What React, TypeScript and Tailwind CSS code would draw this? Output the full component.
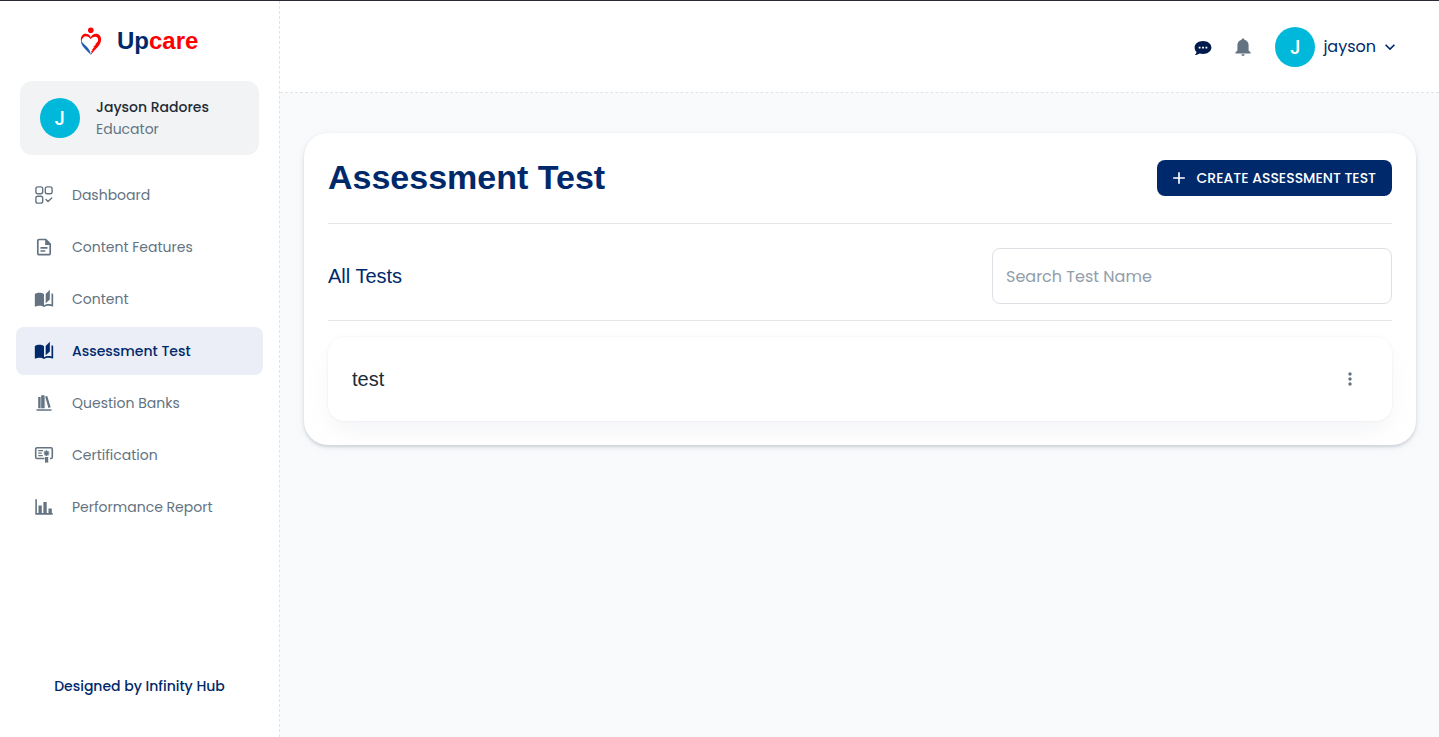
import type { ReactNode } from "react";
import { MdAutoStories, MdMoreVert, MdAdd, MdExpandMore } from "react-icons/md";

function DashboardIcon() {
  return (
    <svg viewBox="0 0 20 20" className="size-5" fill="none" stroke="currentColor" strokeWidth="1.4" strokeLinecap="round" strokeLinejoin="round">
      <rect x="1.9" y="1.9" width="6.8" height="6.8" rx="1.9" />
      <rect x="11.3" y="1.9" width="6.8" height="6.8" rx="1.9" />
      <rect x="1.9" y="11.3" width="6.8" height="6.8" rx="1.9" />
      <path d="M12 14.4l2 2 3.8-3.5" />
    </svg>
  );
}

function DocumentIcon() {
  return (
    <svg viewBox="0 0 20 20" className="size-5" fill="none" stroke="currentColor" strokeWidth="1.7" strokeLinejoin="round">
      <path d="M11.8 2.5H5a1.2 1.2 0 0 0-1.2 1.2v12.8A1.2 1.2 0 0 0 5 17.7h10a1.2 1.2 0 0 0 1.2-1.2V7z" />
      <path d="M11.2 2v5.9h5.6z" fill="currentColor" stroke="none" />
      <path d="M6.500 10.800h7M6.500 14h4.800" />
    </svg>
  );
}

function BooksIcon() {
  return (
    <svg viewBox="0 0 20 20" className="size-5" fill="currentColor">
      <path d="M4.200 4h2.300v11.300H4.200zM7.200 2.300h3.300v13H7.200zM11.200 3.500l2-.6 3.500 11.400-2.300.8zM2.500 16.200h15v1.600h-15z" />
      <path d="M6.500 4h.7v11.300h-.7zM10.500 3.500h.7v11.800h-.7z" opacity=".45" />
    </svg>
  );
}

function CertificateIcon() {
  return (
    <svg viewBox="0 0 20 20" className="size-5" fill="none" stroke="currentColor" strokeWidth="1.6">
      <path d="M10.500 13.500H3a1.300 1.300 0 0 1-1.300-1.300V4A1.300 1.300 0 0 1 3 2.700h14A1.300 1.300 0 0 1 18.300 4v8.200a1.300 1.300 0 0 1-1.300 1.300h-1" strokeLinejoin="round" />
      <path d="M4.200 5.700h5M4.200 8.200h3.600M4.200 10.700h4.500" strokeWidth="1.300" />
      <path d="M12.500 5.300v5.800M9.700 8.200h5.600M10.500 6.200l4 4M10.500 10.200l4-4" strokeWidth="1.300" />
      <path d="M11 12h3.200v6l-1.600-.8-1.600.8z" fill="currentColor" stroke="none" />
    </svg>
  );
}

function ChartIcon() {
  return (
    <svg viewBox="0 0 20 20" className="size-5" fill="currentColor">
      <path d="M1.300 2.300h1.600v13.800h15.800v1.700H1.300zM4.500 8.500h3.300v7.800H4.500zM9.400 5h3.300v11.300H9.400zM14.500 11.500h3.300v4.800h-3.300z" />
    </svg>
  );
}

function LogoIcon() {
  return (
    <svg viewBox="0 0 22 28" className="h-7 w-[22px]">
      <circle cx="10.800" cy="3.300" r="2.800" fill="#f00" />
      <path d="M10.800 10.200C8 4.800.9 6.200.9 12.400c0 .9.100 1.700.4 2.500C2.200 8.600 7.200 7.300 10.800 12.200z" fill="#f00" />
      <path d="M10.800 10.200c2.900-5.400 10.300-4 10.300 2.400 0 6.300-6.600 9.900-10.300 15.400.1-1.300.5-2.300 1-3.100l-.9.100 2.200-2.400-1.500.2 3-2.700-1.700.2 3.400-3.100-1.500.2c3.300-2.300 3.700-3.900 3.100-5.800-.9-2.400-4.500-2.500-7.400.6z" fill="#f00" />
      <path d="M.9 12.400c1.100 5.500 9.400 6.600 9.900 15.600C7.400 23.200.5 20 .9 12.400z" fill="#2460b0" />
    </svg>
  );
}

function ChatIcon() {
  return (
    <svg viewBox="0 0 20 20" className="size-5">
      <path d="M10 4c4.700 0 8.400 2.900 8.400 6.500S14.700 17 10 17c-1.200 0-2.400-.2-3.400-.5-1.100.9-2.900 1.500-4.700 1.500 1-.9 1.500-2 1.600-3-1.200-1.100-1.900-2.700-1.900-4.500C1.600 6.900 5.300 4 10 4z" fill="#001a4d" />
      <path d="M5.700 9.800h1.800v1.700H5.700zM9.100 9.800h1.800v1.700H9.100zM12.500 9.800h1.800v1.700h-1.800z" fill="#fff" />
    </svg>
  );
}

function BellIcon() {
  return (
    <svg viewBox="0 0 20 20" className="size-5" fill="#637381">
      <path d="M10 1.500c.8 0 1.300.5 1.400 1.200 2.600.6 4.200 2.700 4.200 5.500v5.300l2 1.900v1H2.400v-1l2-1.900V8.200c0-2.800 1.600-4.900 4.200-5.500.1-.7.600-1.200 1.400-1.200zM8.300 17.200h3.400a1.700 1.700 0 0 1-3.400 0z" />
    </svg>
  );
}

const navItems: { label: string; icon: ReactNode; active?: boolean }[] = [
  { label: "Dashboard", icon: <DashboardIcon /> },
  { label: "Content Features", icon: <DocumentIcon /> },
  { label: "Content", icon: <MdAutoStories className="size-5" /> },
  { label: "Assessment Test", icon: <MdAutoStories className="size-5" />, active: true },
  { label: "Question Banks", icon: <BooksIcon /> },
  { label: "Certification", icon: <CertificateIcon /> },
  { label: "Performance Report", icon: <ChartIcon /> },
];

function Avatar() {
  return (
    <span className="flex size-10 shrink-0 items-center justify-center rounded-full bg-[#00b8d9] text-xl font-medium text-white">
      J
    </span>
  );
}

function Sidebar() {
  return (
    <aside className="flex w-[280px] shrink-0 flex-col border-r border-dashed border-[#e0e4e8] bg-white">
      <a href="#" className="flex h-20 items-center gap-[15px] pl-20 font-['Liberation_Sans',sans-serif] text-2xl font-bold text-[#00296b]">
        <LogoIcon />
        <span>
          Up<span className="text-[#f00]">care</span>
        </span>
      </a>
      <a href="#" className="mx-5 flex items-center gap-4 rounded-xl bg-[#f1f3f5] px-5 py-[15px] text-sm leading-[22px]">
        <Avatar />
        <span className="flex flex-col">
          <span className="font-medium text-[#212b36]">Jayson Radores</span>
          <span className="text-[#637381]">Educator</span>
        </span>
      </a>
      <nav className="mt-4 flex flex-col gap-1 px-4">
        {navItems.map((item) => (
          <a
            key={item.label}
            href="#"
            aria-current={item.active ? "page" : undefined}
            className={
              "flex h-12 items-center gap-[18px] rounded-lg pl-[18px] text-sm " +
              (item.active ? "bg-[#ebeef6] font-medium text-[#00296b]" : "text-[#637381]")
            }
          >
            {item.icon}
            {item.label}
          </a>
        ))}
      </nav>
      <p className="mt-auto pb-10 text-center text-sm leading-[22px] font-medium text-[#00296b]">
        Designed by Infinity Hub
      </p>
    </aside>
  );
}

function Header() {
  return (
    <header className="flex h-[92px] items-center justify-end border-b border-dashed border-[#e0e4e8] bg-white pr-[39px]">
      <button aria-label="Messages" className="mr-5">
        <ChatIcon />
      </button>
      <button aria-label="Notifications" className="mr-[22px]">
        <BellIcon />
      </button>
      <button className="flex items-center gap-2 text-base text-[#00296b]">
        <Avatar />
        jayson
        <MdExpandMore className="-ml-1 size-5" />
      </button>
    </header>
  );
}

export default function App() {
  return (
    <div className="flex min-h-screen border-t border-[#2b2a33] bg-[#f9fafc] font-[Poppins,Inter,sans-serif]">
      <Sidebar />
      <div className="min-w-0 flex-1">
        <Header />
        <main className="pt-10 pr-[23px] pb-10 pl-6">
          <section className="rounded-3xl bg-white p-6 shadow-[0_2px_3px_rgba(99,115,129,0.24),0_2px_8px_rgba(145,158,171,0.14)]">
            <div className="flex items-center justify-between border-b border-[#e3e6e9] pb-6">
              <h1 className="pb-[2px] font-['Liberation_Sans',sans-serif] text-[34px] leading-10 font-bold text-[#00296b]">
                Assessment Test
              </h1>
              <button className="flex h-9 items-center gap-2 rounded-lg bg-[#00296b] pr-4 pl-3 text-sm font-medium text-white">
                <MdAdd className="size-5" />
                CREATE ASSESSMENT TEST
              </button>
            </div>
            <div className="flex items-center justify-between border-b border-[#e3e6e9] pt-6 pb-4">
              <h2 className="font-['Liberation_Sans',sans-serif] text-xl text-[#00296b]">All Tests</h2>
              <input
                type="text"
                aria-label="Search Test Name"
                placeholder="Search Test Name"
                className="h-14 w-[400px] rounded-lg border border-[#dce0e4] bg-white px-[13px] text-base text-[#212b36] placeholder:text-[#919eab]"
              />
            </div>
            <article className="mt-4 flex h-[84px] items-center justify-between rounded-2xl bg-white px-6 shadow-[0_0_2px_rgba(145,158,171,0.2),0_12px_24px_-4px_rgba(145,158,171,0.12)]">
              <h3 className="font-['Liberation_Sans',sans-serif] text-xl text-[#212b36]">test</h3>
              <button aria-label="More options" className="px-2 text-[#637381]">
                <MdMoreVert className="size-5" />
              </button>
            </article>
          </section>
        </main>
      </div>
    </div>
  );
}
